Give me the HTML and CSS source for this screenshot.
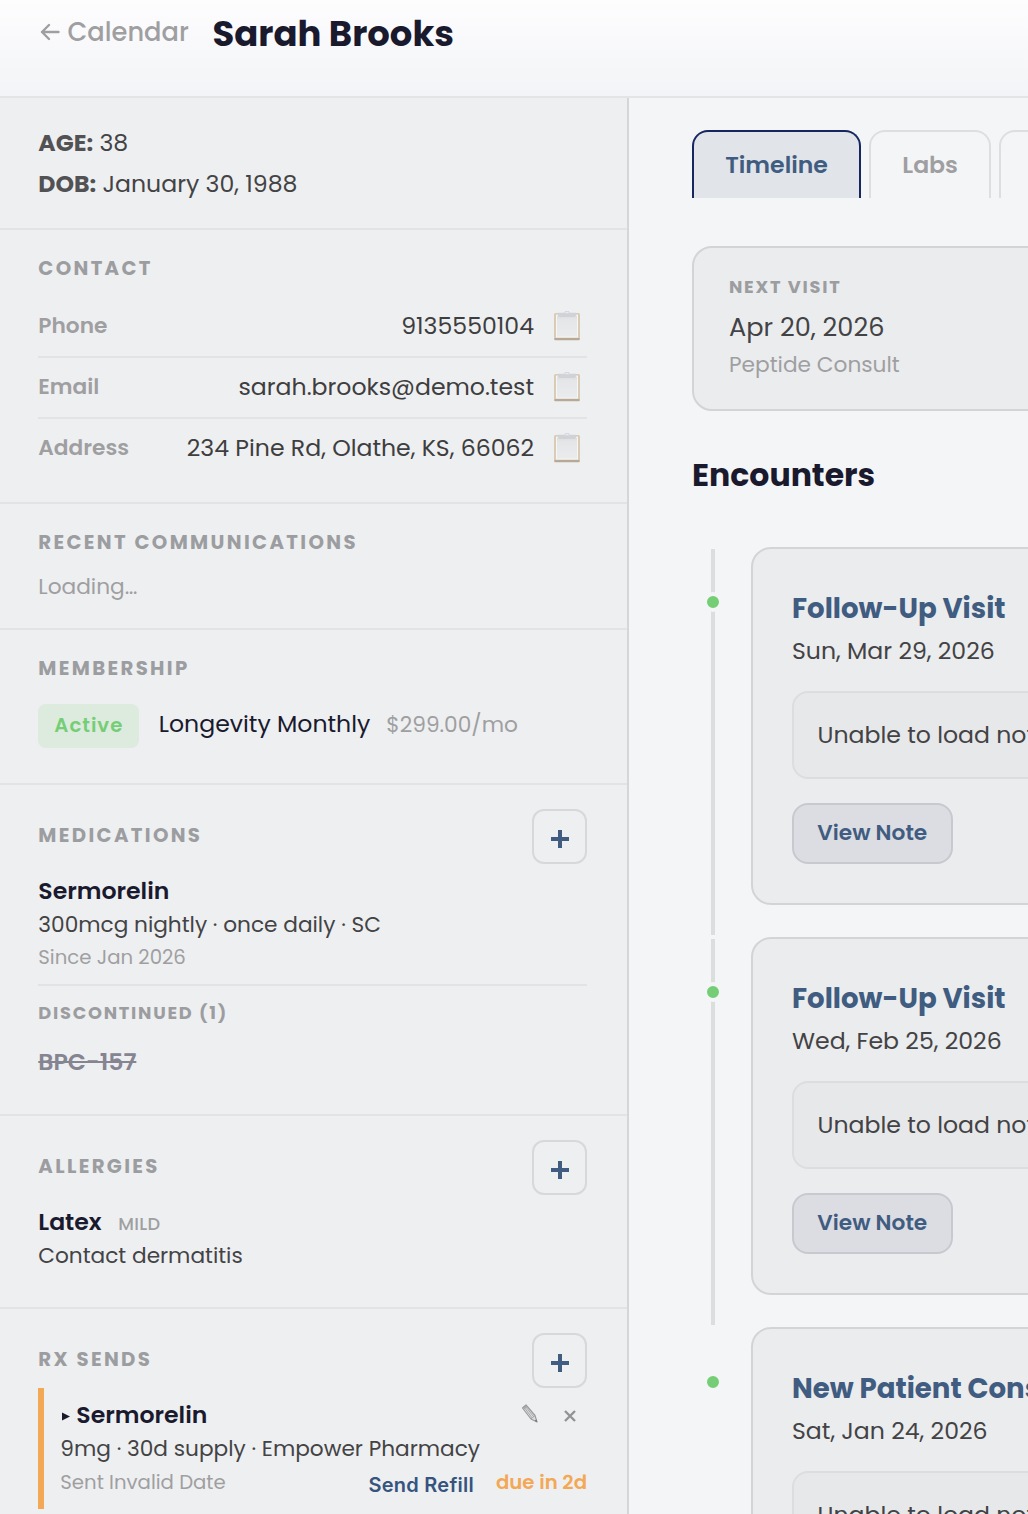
FILE: index.html
```
<!DOCTYPE html>
<html lang="en">
<head>
	<meta charset="UTF-8">
	<title>Sarah Brooks</title>
	<link rel="stylesheet" href="styles.css">
</head>
<body>
	<svg class="icon-defs">
		<defs>
			<linearGradient id="paper" x1="0" y1="0" x2="0" y2="1">
				<stop offset="0" stop-color="#dcdde0"/>
				<stop offset="0.2" stop-color="#e5e6e8"/>
				<stop offset="1" stop-color="#eaebed"/>
			</linearGradient>
			<symbol id="clipboard" viewBox="0 0 26 30">
				<rect x="0" y="2" width="26" height="27" rx="1.6" fill="#d9cbb4"/>
				<rect x="0.3" y="27" width="25.4" height="2.2" rx="1" fill="#b8a996"/>
				<rect x="2" y="3.6" width="22" height="23" fill="#f5f6f7"/>
				<rect x="3" y="4.6" width="20" height="21" fill="url(#paper)"/>
				<path d="M4 1.800h18v2.600l-1.500 1.500h-15l-1.500-1.500z" fill="#d0d2d6"/>
				<path d="M10.500 2.200a2.500 2 0 0 1 5 0" fill="#e8ebf0" stroke="#ccd5e0" stroke-width="1"/>
			</symbol>
		</defs>
	</svg>

	<header class="header">
		<a class="back">
			<svg class="back-arrow" viewBox="0 0 20 18"><path d="M18.500 9H2M9 2L2 9L9 16" fill="none" stroke="currentColor" stroke-width="2.400" stroke-linecap="round" stroke-linejoin="round"/></svg>
			<span>Calendar</span>
		</a>
		<h1>Sarah Brooks</h1>
	</header>

	<div class="layout">
		<aside class="sidebar">
			<section class="demographics">
				<div><strong>AGE:</strong> 38</div>
				<div><strong>DOB:</strong> January 30, 1988</div>
			</section>

			<section class="contact">
				<h3>Contact</h3>
				<div class="contact-row">
					<span class="label">Phone</span>
					<span class="value">9135550104</span>
					<svg class="copy"><use href="#clipboard"/></svg>
				</div>
				<div class="contact-row">
					<span class="label">Email</span>
					<span class="value">sarah.brooks@demo.test</span>
					<svg class="copy"><use href="#clipboard"/></svg>
				</div>
				<div class="contact-row">
					<span class="label">Address</span>
					<span class="value">234 Pine Rd, Olathe, KS, 66062</span>
					<svg class="copy"><use href="#clipboard"/></svg>
				</div>
			</section>

			<section class="comms">
				<h3>Recent Communications</h3>
				<p class="loading">Loading…</p>
			</section>

			<section class="membership">
				<h3>Membership</h3>
				<div class="plan">
					<span class="badge">Active</span>
					<span class="plan-name">Longevity Monthly</span>
					<span class="plan-price">$299.00/mo</span>
				</div>
			</section>

			<section class="list-section">
				<div class="section-head">
					<h3>Medications</h3>
					<button class="add"><svg viewBox="0 0 18 18"><path d="M9 0v18M0 9h18"/></svg></button>
				</div>
				<div class="item-name">Sermorelin</div>
				<div class="item-detail">300mcg nightly · once daily · SC</div>
				<div class="item-since">Since Jan 2026</div>
				<div class="discontinued">
					<h4>Discontinued (1)</h4>
					<div class="item-name stopped">BPC-157</div>
				</div>
			</section>

			<section class="list-section allergies">
				<div class="section-head">
					<h3>Allergies</h3>
					<button class="add"><svg viewBox="0 0 18 18"><path d="M9 0v18M0 9h18"/></svg></button>
				</div>
				<div class="item-name">Latex <span class="severity">MILD</span></div>
				<div class="item-detail">Contact dermatitis</div>
			</section>

			<section class="list-section rx">
				<div class="section-head">
					<h3>Rx Sends</h3>
					<button class="add"><svg viewBox="0 0 18 18"><path d="M9 0v18M0 9h18"/></svg></button>
				</div>
				<div class="rx-item">
					<div class="rx-top">
						<svg class="caret" viewBox="0 0 8 8"><path d="M0 0L8 4L0 8z"/></svg>
						<span class="item-name">Sermorelin</span>
						<svg class="pencil" viewBox="0 0 18 20">
							<path d="M1.500 4L5 1L14 11.500L16 18L10 15z" fill="#dcdddf" stroke="#9a9b9d" stroke-width="1.200" stroke-linejoin="round"/>
							<path d="M2.700 2.700L11.200 14M3.900 1.900L12.800 12.800M2.500 5.200L5.800 2.500M10 15L14 11.500" fill="none" stroke="#9a9b9d" stroke-width="0.800"/>
							<path d="M13.500 16.700L15.500 15.500L16.300 18.300z" fill="#77787a"/>
						</svg>
						<svg class="remove" viewBox="0 0 12 12"><path d="M1 1L11 11M11 1L1 11"/></svg>
					</div>
					<div class="item-detail">9mg · 30d supply · Empower Pharmacy</div>
					<div class="rx-bottom">
						<span class="item-since">Sent Invalid Date</span>
						<a class="refill">Send Refill</a>
						<span class="due">due in 2d</span>
					</div>
				</div>
			</section>
		</aside>

		<main class="main">
			<nav class="tabs">
				<a class="tab active">Timeline</a>
				<a class="tab">Labs</a>
				<a class="tab"></a>
			</nav>

			<div class="next-visit">
				<h4>Next Visit</h4>
				<div class="date">Apr 20, 2026</div>
				<div class="type">Peptide Consult</div>
			</div>

			<h2>Encounters</h2>

			<div class="timeline">
				<div class="encounter">
					<div class="rail"><span class="dot"></span></div>
					<div class="card">
						<div class="card-title">Follow-Up Visit</div>
						<div class="card-date">Sun, Mar 29, 2026</div>
						<div class="note">Unable to load note</div>
						<button class="view-note">View Note</button>
					</div>
				</div>
				<div class="encounter">
					<div class="rail"><span class="dot"></span></div>
					<div class="card">
						<div class="card-title">Follow-Up Visit</div>
						<div class="card-date">Wed, Feb 25, 2026</div>
						<div class="note">Unable to load note</div>
						<button class="view-note">View Note</button>
					</div>
				</div>
				<div class="encounter">
					<div class="rail"><span class="dot"></span></div>
					<div class="card">
						<div class="card-title">New Patient Consult</div>
						<div class="card-date">Sat, Jan 24, 2026</div>
						<div class="note">Unable to load note</div>
					</div>
				</div>
			</div>
		</main>
	</div>
</body>
</html>
```
FILE: styles.css
```
* {
	box-sizing: border-box;
}

body {
	margin: 0;
	height: 1514px;
	overflow: hidden;
	background: #f4f5f7;
	font-family: Poppins, Inter, sans-serif;
	font-size: 23.6px;
	color: #434345;
	white-space: nowrap;
}

h1, h2, h3, h4, p {
	margin: 0;
}

button {
	font-family: inherit;
	padding: 0;
}

.icon-defs {
	display: block;
	width: 0;
	height: 0;
}

/* Header */
.header {
	display: flex;
	height: 98px;
	padding: 8px 0 0 40px;
	border-bottom: 2px solid #e3e4e6;
	background: linear-gradient(#fdfdfe, #f3f4f7);
}

.back {
	display: flex;
	align-items: center;
	width: 172.500px;
	height: 48px;
	gap: 7.500px;
	font-size: 25.7px;
	font-weight: 500;
	color: #9f9fa1;
}

.back-arrow {
	width: 20px;
	height: 18px;
}

h1 {
	font-size: 35.4px;
	line-height: 51px;
	color: #1a1a2e;
}

.layout {
	display: flex;
	width: 1500px;
	height: 1416px;
}

/* Sidebar */
.sidebar {
	flex: none;
	width: 629px;
	border-right: 2px solid #d5d6d8;
	background: #eeeff1;
}

.sidebar section {
	padding: 23px 40px 24px 38.300px;
	border-bottom: 2px solid #e2e3e5;
}

.sidebar .demographics {
	padding-top: 24px;
	padding-bottom: 24px;
	line-height: 41px;
}

.demographics strong {
	color: #525254;
}

h3 {
	font-size: 19.7px;
	line-height: 30px;
	letter-spacing: 2.35px;
	text-transform: uppercase;
	color: #9c9da0;
}

.contact h3 {
	margin-bottom: 14px;
}

.contact-row {
	display: flex;
	align-items: center;
	height: 61px;
	padding-right: 7px;
	border-bottom: 2px solid #e2e3e5;
}

.contact-row:last-child {
	height: 59px;
	border-bottom: none;
}

.label {
	flex: 1;
	padding-bottom: 2px;
	font-size: 21.7px;
	font-weight: 600;
	color: #9f9fa1;
}

.value {
	padding-bottom: 2px;
	color: #3e3e40;
}

.copy {
	width: 26px;
	height: 30px;
	margin: 0 0 1px 20px;
}

.sidebar .comms {
	padding-bottom: 25px;
}

.loading {
	margin-top: 13px;
	font-size: 21.7px;
	line-height: 33px;
	color: #9f9fa1;
}

.sidebar .membership {
	padding-bottom: 35px;
}

.plan {
	display: flex;
	align-items: center;
	height: 44px;
	margin-top: 21px;
}

.badge {
	width: 101px;
	height: 44px;
	margin-right: 19.500px;
	border-radius: 8px;
	background: #dcebde;
	font-size: 19.7px;
	font-weight: 600;
	line-height: 43px;
	letter-spacing: 1px;
	text-align: center;
	color: #75ce75;
}

.plan-name {
	margin-right: 16px;
	padding-bottom: 5px;
	color: #1a1a2e;
}

.plan-price {
	padding-bottom: 4px;
	font-size: 21.7px;
	color: #9f9fa1;
}

.sidebar .list-section {
	padding-top: 24px;
	padding-bottom: 35px;
}

.section-head {
	display: flex;
	justify-content: space-between;
	height: 55px;
	margin-bottom: 10px;
}

.section-head h3 {
	padding-top: 11px;
}

.add {
	display: flex;
	align-items: center;
	justify-content: center;
	width: 55px;
	height: 55px;
	padding-top: 4px;
	border: 2px solid #d7d8da;
	border-radius: 12px;
	background: none;
}

.add svg {
	width: 18px;
	height: 18px;
	stroke: #405c80;
	stroke-width: 4;
}

.item-name {
	font-weight: 600;
	line-height: 34px;
	color: #1a1a2e;
}

.item-detail {
	font-size: 21.65px;
	line-height: 34px;
}

.item-since {
	font-size: 19.7px;
	line-height: 31px;
	color: #9f9fa1;
}

.discontinued {
	margin-top: 11px;
	padding-top: 13px;
	border-top: 2px solid #e2e3e5;
}

h4 {
	font-size: 17.8px;
	line-height: 28px;
	letter-spacing: 1.75px;
	text-transform: uppercase;
	color: #9c9da0;
}

.stopped {
	margin-top: 18px;
	text-decoration: line-through;
	text-decoration-thickness: 2px;
	color: #858592;
}

.sidebar .allergies {
	padding-bottom: 34px;
}

.severity {
	margin-left: 11px;
	font-size: 17.8px;
	font-weight: 500;
	line-height: 20px;
	letter-spacing: 0.3px;
	color: #9f9fa1;
}

.sidebar .rx {
	padding-bottom: 0;
	border-bottom: none;
}

.rx .section-head {
	margin-bottom: 0;
}

.rx-item {
	height: 121px;
	padding: 10px 0 0 16px;
	border-left: 6px solid #f3a856;
}

.rx-top {
	display: flex;
	align-items: center;
}

.caret {
	width: 8px;
	height: 9px;
	margin: 3px 6px 0 2px;
	fill: #1a1a2e;
}

.rx-top .item-name {
	flex: 1;
}

.pencil {
	width: 18px;
	height: 20px;
	margin: 0 25px 2px 0;
}

.remove {
	width: 12px;
	height: 12px;
	margin: 1px 11px 0 0;
	stroke: #929395;
	stroke-width: 2.4;
}

.rx-bottom {
	display: flex;
	align-items: center;
	margin-top: 1px;
}

.rx-bottom .item-since {
	flex: 1;
}

.refill {
	margin: 5px 22px 0 0;
	font-family: Inter, sans-serif;
	font-size: 20px;
	font-weight: 600;
	line-height: 26px;
	letter-spacing: 0.25px;
	color: #35547e;
}

.due {
	font-size: 19.7px;
	font-weight: 600;
	line-height: 31px;
	color: #f3a856;
}

/* Main column */
.main {
	flex: 1;
	padding: 32px 40px 0 63px;
}

.tabs {
	display: flex;
	gap: 8px;
	height: 68px;
}

.tab {
	min-width: 122px;
	padding: 0 31.200px;
	border: 2px solid #dddee0;
	border-bottom: none;
	border-radius: 16px 16px 0 0;
	font-weight: 600;
	line-height: 66px;
	color: #9f9fa1;
}

.tab.active {
	border-color: #17265f;
	background: #e1e4e9;
	color: #405c80;
}

.next-visit {
	height: 165px;
	margin-top: 48px;
	padding: 25px 35px;
	border: 2px solid #d3d4d6;
	border-radius: 20px;
	background: #ebecee;
}

.next-visit .date {
	margin-top: 7px;
	font-size: 25.6px;
	line-height: 38px;
}

.next-visit .type {
	margin-top: 1px;
	font-size: 21.7px;
	line-height: 36px;
	color: #9f9fa1;
}

h2 {
	margin: 40px 0 48px;
	font-size: 31.5px;
	line-height: 48px;
	color: #1a1a2e;
}

.encounter {
	display: flex;
	height: 390px;
}

.rail {
	position: relative;
	flex: none;
	width: 59px;
}

/* vertical line linking one visit to the next */
.rail::before {
	content: "";
	position: absolute;
	left: 19px;
	top: 2px;
	bottom: 2px;
	width: 4px;
	background: #dcdddf;
}

.encounter:last-child .rail::before {
	display: none;
}

.dot {
	position: absolute;
	left: 11px;
	top: 45px;
	width: 20px;
	height: 20px;
	border: 4px solid #f4f5f7;
	border-radius: 50%;
	background: #75ce75;
}

.card {
	flex: 1;
	height: 358px;
	padding: 39px;
	border: 2px solid #d3d4d6;
	border-radius: 20px;
	background: #ebecee;
}

.card-title {
	font-size: 27.6px;
	font-weight: 700;
	line-height: 42px;
	color: #405c80;
}

.card-date {
	margin-top: 3px;
	line-height: 36px;
}

.note {
	height: 88px;
	margin: 22px 0 24px;
	padding-left: 23.500px;
	border: 2px solid #dcdddf;
	border-radius: 16px;
	background: #e7e8ea;
	line-height: 84px;
}

.view-note {
	display: block;
	width: 160.500px;
	height: 61px;
	border: 2px solid #c8c9d0;
	border-radius: 16px;
	background: #dcdde3;
	font-size: 21.7px;
	font-weight: 600;
	line-height: 55px;
	padding-bottom: 2px;
	color: #405c80;
}
```
